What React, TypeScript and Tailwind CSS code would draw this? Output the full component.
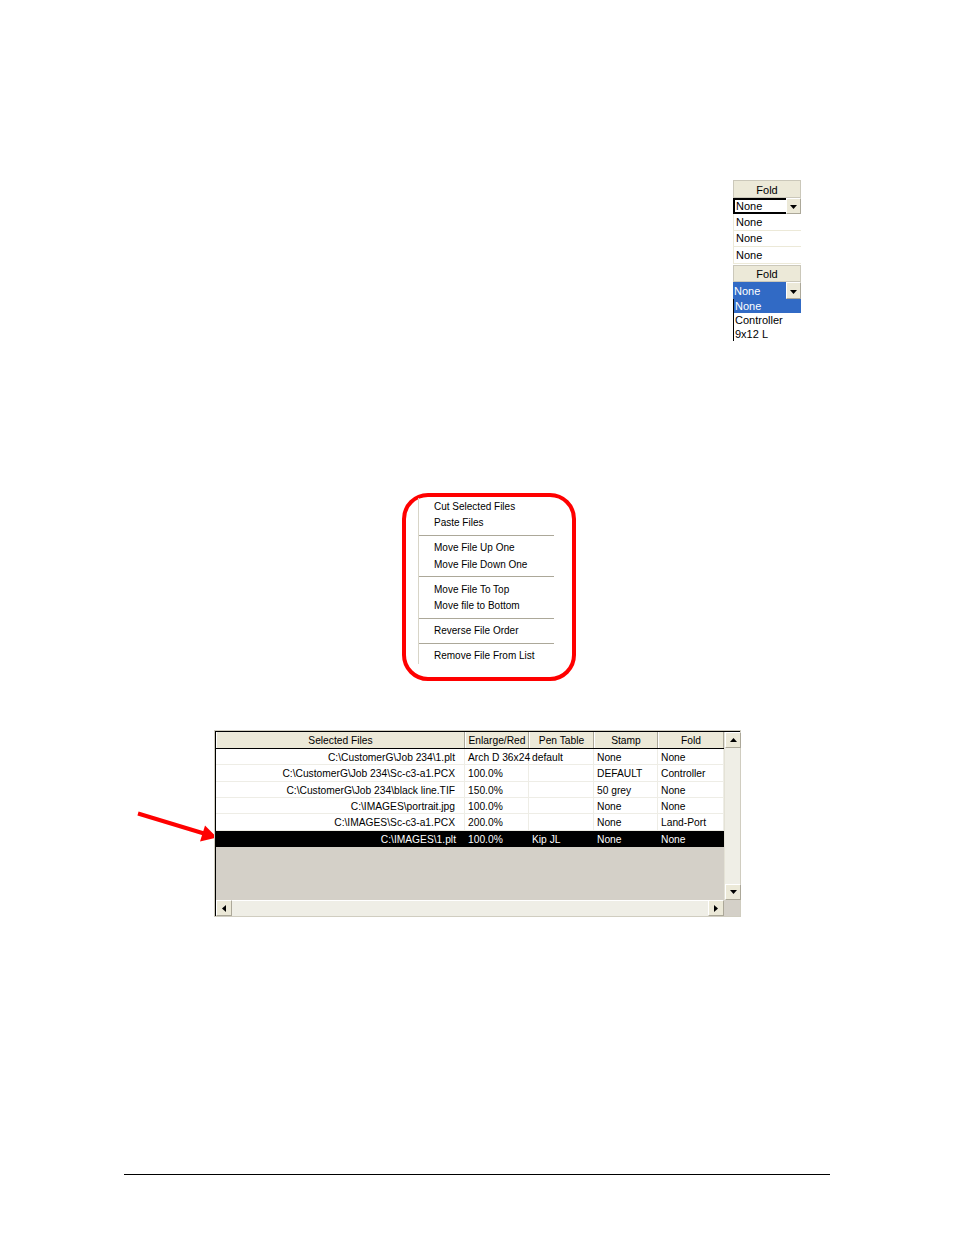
import React from "react";

type Dir = "up" | "down" | "left" | "right";

function Tri({ dir }: { dir: Dir }) {
  if (dir === "down")
    return (
      <svg width="7" height="4" viewBox="0 0 7 4">
        <polygon points="0,0 7,0 3.5,4" fill="#000" />
      </svg>
    );
  if (dir === "up")
    return (
      <svg width="7" height="4" viewBox="0 0 7 4">
        <polygon points="0,4 7,4 3.5,0" fill="#000" />
      </svg>
    );
  if (dir === "left")
    return (
      <svg width="4" height="7" viewBox="0 0 4 7">
        <polygon points="4,0 4,7 0,3.5" fill="#000" />
      </svg>
    );
  return (
    <svg width="4" height="7" viewBox="0 0 4 7">
      <polygon points="0,0 0,7 4,3.5" fill="#000" />
    </svg>
  );
}

function ScrollBtn({ dir, extra = "" }: { dir: Dir; extra?: string }) {
  return (
    <div
      className={
        "w-[16px] h-[16px] shrink-0 bg-[#ece9d8] border border-t-white border-l-white border-r-[#aca899] border-b-[#aca899] flex items-center justify-center " +
        extra
      }
    >
      <Tri dir={dir} />
    </div>
  );
}

function ComboBtn() {
  return (
    <div className="w-[15px] h-full shrink-0 bg-[#ece9d8] border-l border-t border-l-white border-t-white border-r border-b border-r-[#aca899] border-b-[#aca899] flex items-center justify-center pt-[2px]">
      <Tri dir="down" />
    </div>
  );
}

function FoldWidget() {
  return (
    <div className="ml-[733px] mt-[180px] w-[68px] text-[11px] leading-none text-black">
      <div className="h-[18px] bg-[#ece9d8] border border-[#cbc8ba] flex items-center justify-center pt-[2px]">
        Fold
      </div>
      <div className="h-[16px] flex">
        <div className="flex-1 bg-white border-2 border-r-0 border-black flex items-center pl-[1px]">
          None
        </div>
        <ComboBtn />
      </div>
      {[0, 1, 2].map((i) => (
        <div
          key={i}
          className="h-[16.5px] bg-white border-l border-b border-[#ece9d8] flex items-center pl-[2px] pt-[1px]"
        >
          None
        </div>
      ))}
      <div className="h-[1.5px]" />
      <div className="h-[17px] bg-[#ece9d8] border border-[#cbc8ba] flex items-center justify-center pt-[1px]">
        Fold
      </div>
      <div className="h-[17px] flex">
        <div className="flex-1 bg-[#316ac5] text-white flex items-center pl-[1px] pt-[1px]">
          None
        </div>
        <ComboBtn />
      </div>
      <div className="border-l border-black">
        <div className="h-[14px] bg-[#316ac5] text-white flex items-center pl-[1px]">
          None
        </div>
        <div className="h-[14px] flex items-center pl-[1px]">Controller</div>
        <div className="h-[14px] flex items-center pl-[1px]">9x12 L</div>
      </div>
    </div>
  );
}

type MenuEntry = { t: string } | { sep: true };

const menu: MenuEntry[] = [
  { t: "Cut Selected Files" },
  { t: "Paste Files" },
  { sep: true },
  { t: "Move File Up One" },
  { t: "Move File Down One" },
  { sep: true },
  { t: "Move File To Top" },
  { t: "Move file to Bottom" },
  { sep: true },
  { t: "Reverse File Order" },
  { sep: true },
  { t: "Remove File From List" },
];

function ContextMenu() {
  return (
    <div className="ml-[402px] mt-[152px] w-[174px] h-[188px] border-4 border-[#ff0000] rounded-[26px] bg-white pl-[12px] pt-[0.75px]">
      <div className="w-[136px] border-l border-[#d8d5c8] text-[10px] leading-none text-black">
        {menu.map((m, i) =>
          "sep" in m ? (
            <div key={i} className="h-[8.5px] flex items-center">
              <div className="w-full h-px bg-[#aca899]" />
            </div>
          ) : (
            <div key={i} className="h-[16.5px] flex items-center pl-[15px] pt-[1px] whitespace-nowrap">
              {m.t}
            </div>
          )
        )}
      </div>
    </div>
  );
}

const cols = [
  { name: "Selected Files", w: "w-[249px]" },
  { name: "Enlarge/Red", w: "w-[64px]" },
  { name: "Pen Table", w: "w-[65px]" },
  { name: "Stamp", w: "w-[64px]" },
  { name: "Fold", w: "w-[66px]" },
];

const rows: string[][] = [
  ["C:\\CustomerG\\Job 234\\1.plt", "Arch D 36x24", "default", "None", "None"],
  ["C:\\CustomerG\\Job 234\\Sc-c3-a1.PCX", "100.0%", "", "DEFAULT", "Controller"],
  ["C:\\CustomerG\\Job 234\\black line.TIF", "150.0%", "", "50 grey", "None"],
  ["C:\\IMAGES\\portrait.jpg", "100.0%", "", "None", "None"],
  ["C:\\IMAGES\\Sc-c3-a1.PCX", "200.0%", "", "None", "Land-Port"],
  ["C:\\IMAGES\\1.plt", "100.0%", "Kip JL", "None", "None"],
];

function FileTable() {
  return (
    <div className="w-[527px] h-[187px] border border-[#d0cdc0] shrink-0">
      <div className="w-full h-full border-l border-t border-black flex flex-col">
        <div className="flex h-[168px]">
          <div className="w-[508px] h-full bg-[#d4d0c8] flex flex-col text-[10.25px] leading-none">
            <div className="h-[17px] flex border-b border-black shrink-0">
              {cols.map((c, i) => (
                <div
                  key={i}
                  className={
                    c.w +
                    " h-full bg-[#ece9d8] border-l border-l-white border-r border-r-[#aca899] flex items-center justify-center pt-[3px] text-black whitespace-nowrap"
                  }
                >
                  {c.name}
                </div>
              ))}
            </div>
            {rows.map((r, ri) => {
              const sel = ri === rows.length - 1;
              return (
                <div
                  key={ri}
                  className={
                    "h-[16.33px] flex shrink-0 " +
                    (sel ? "bg-black text-white" : "bg-white text-black border-b border-[#eeede6]")
                  }
                >
                  {r.map((cell, ci) => (
                    <div
                      key={ci}
                      className={
                        cols[ci].w +
                        " h-full flex items-center pt-[3px] whitespace-nowrap overflow-visible " +
                        (ci === 0 ? "justify-end pr-[9px] " : "pl-[3px] ") +
                        (sel ? "" : "border-r border-[#eeede6]")
                      }
                    >
                      <span className={ci === 1 ? "relative z-0" : "relative z-10"}>{cell}</span>
                    </div>
                  ))}
                </div>
              );
            })}
          </div>
          <div className="w-[16px] h-full flex flex-col bg-[#efeee6] border-l border-[#e4e2d6]">
            <ScrollBtn dir="up" />
            <div className="flex-1" />
            <ScrollBtn dir="down" extra="border-t-[#aca899]" />
          </div>
        </div>
        <div className="flex h-[16px]">
          <div className="w-[508px] h-full flex bg-[#efeee6]">
            <ScrollBtn dir="left" />
            <div className="flex-1 border-t border-white" />
            <ScrollBtn dir="right" />
          </div>
          <div className="w-[16px] h-full bg-[#d4d0c8]" />
        </div>
      </div>
    </div>
  );
}

function RedArrow() {
  return (
    <svg width="214" height="187" viewBox="0 0 214 187" className="shrink-0 overflow-visible">
      <line x1="138" y1="83.5" x2="204" y2="103.5" stroke="#ff0000" strokeWidth="4" />
      <polygon points="217,107.5 200,111.5 205,95.5" fill="#ff0000" />
    </svg>
  );
}

export default function App() {
  return (
    <div className="w-[954px] h-[1235px] bg-white flex flex-col font-['Liberation_Sans',Arial,sans-serif] overflow-hidden">
      <FoldWidget />
      <ContextMenu />
      <div className="mt-[49px] flex">
        <RedArrow />
        <FileTable />
      </div>
      <div className="mt-[257px] ml-[124px] w-[706px] h-px bg-black" />
    </div>
  );
}
